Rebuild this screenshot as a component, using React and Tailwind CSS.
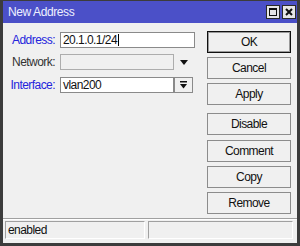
import React from "react";

const Btn = ({ label, primary, className = "" }) => (
  <div
    className={`h-[22px] w-[84px] flex items-center justify-center bg-[#f0f0f0] text-[#111] ${
      primary ? "border border-[#111] shadow-[inset_0_0_0_1px_#9a9a9a]" : "border border-[#8c8c8c]"
    } ${className}`}
  >
    {label}
  </div>
);

const App = () => {
  return (
    <div className="w-[300px] h-[246px] flex flex-col border-x-[3px] border-b-[3px] border-t border-[#3c3c3c] bg-[#3c3c3c] font-['Liberation_Sans',Arial,sans-serif] text-[12px] tracking-[-0.55px] leading-none">
      {/* title bar */}
      <div className="h-[22px] bg-[#4b50c8] flex items-center justify-between pl-[5px] pr-[1px]">
        <span className="text-[#eef0ff] text-[12px] tracking-[-0.4px]">New Address</span>
        <div className="flex gap-[2px]">
          <div className="w-[14px] h-[14px] bg-[#e6e6e6] border border-[#2a2a2a] flex items-center justify-center">
            <div className="w-[8px] h-[8px] border border-[#111] border-t-2" />
          </div>
          <div className="w-[14px] h-[14px] bg-[#e6e6e6] border border-[#2a2a2a] flex items-center justify-center">
            <svg width="8" height="8" viewBox="0 0 8 8">
              <path d="M1 1 L7 7 M7 1 L1 7" stroke="#111" strokeWidth="2" />
            </svg>
          </div>
        </div>
      </div>

      {/* body */}
      <div className="flex-1 bg-[#f0f0f0] flex flex-col">
        <div className="h-[195px] flex">
          <div className="w-[204px] pt-[9px] flex flex-col">
            <div className="flex items-center h-[16px]">
              <span className="w-[52px] text-right mr-[5px] text-[#2424dc]">Address:</span>
              <div className="w-[135px] h-[16px] bg-white border border-[#8a8a8a] flex items-center pl-[2px] text-[#111]">
                20.1.0.1/24
                <span className="ml-[1px] w-px h-[12px] bg-black" />
              </div>
            </div>
            <div className="flex items-center h-[16px] mt-[6px]">
              <span className="w-[52px] text-right mr-[5px] text-[#333]">Network:</span>
              <div className="w-[114px] h-[16px] bg-[#f0f0f0] border border-[#adadad]" />
              <div className="w-[19px] flex justify-center">
                <svg width="8" height="5" viewBox="0 0 8 5">
                  <polygon points="0,0 8,0 4,5" fill="#111" />
                </svg>
              </div>
            </div>
            <div className="flex items-center h-[16px] mt-[7px]">
              <span className="w-[52px] text-right mr-[5px] text-[#2424dc]">Interface:</span>
              <div className="w-[114px] h-[16px] bg-white border border-[#8a8a8a] flex items-center pl-[2px] text-[#111]">
                vlan200
              </div>
              <div className="w-[19px] h-[16px] border border-[#8a8a8a] bg-[#f0f0f0] flex items-center justify-center">
                <svg width="7" height="8" viewBox="0 0 7 8">
                  <rect x="0" y="0" width="7" height="1.5" fill="#111" />
                  <polygon points="0,3 7,3 3.5,7.5" fill="#111" />
                </svg>
              </div>
            </div>
          </div>

          <div className="pt-[8px] flex flex-col gap-[4px]">
            <Btn label="OK" primary />
            <Btn label="Cancel" />
            <Btn label="Apply" />
            <Btn label="Disable" className="mt-[4px]" />
            <Btn label="Comment" className="mt-[1px]" />
            <Btn label="Copy" />
            <Btn label="Remove" />
          </div>
        </div>

        <div className="h-px bg-[#a0a0a0]" />
        <div className="h-px bg-white" />

        <div className="flex gap-[3px] pl-[2px] pr-[4px] pt-[1px]">
          <div className="w-[140px] h-[18px] border border-[#a0a0a0] border-b-white border-r-white flex items-center pl-[2px] text-[#111]">
            enabled
          </div>
          <div className="flex-1 h-[18px] border border-[#a0a0a0] border-b-white border-r-white" />
        </div>
      </div>
    </div>
  );
};

export default App;
